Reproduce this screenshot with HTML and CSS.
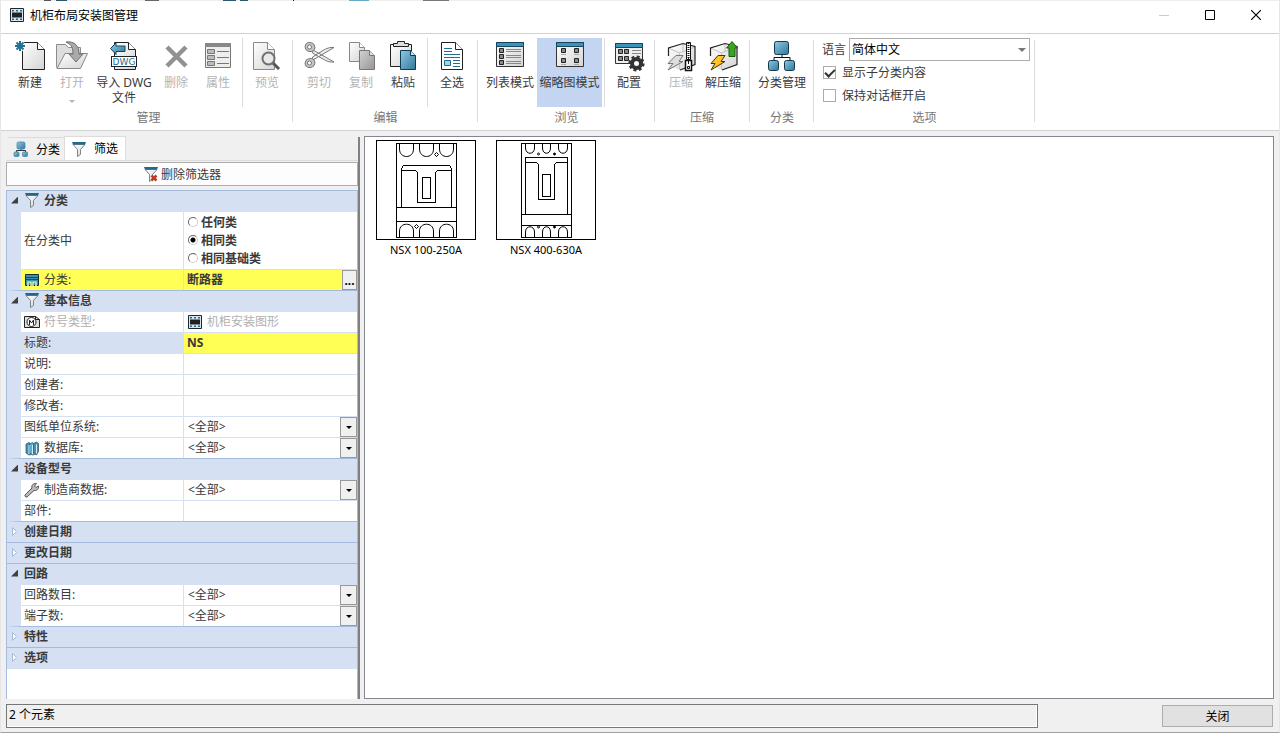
FILE: index.html
```html
<!DOCTYPE html>
<html lang="zh-CN">
<head>
<meta charset="utf-8">
<title>机柜布局安装图管理</title>
<link rel="stylesheet" href="styles.css">
</head>
<body>
<svg class="defs" aria-hidden="true">
  <defs>
    <linearGradient id="paper" x1="0" y1="0" x2="1" y2="1"><stop offset="0" stop-color="#fff"/><stop offset="1" stop-color="#d4d4d4"/></linearGradient>
    <linearGradient id="grey" x1="0" y1="0" x2="1" y2="1"><stop offset="0" stop-color="#d2d2d2"/><stop offset="1" stop-color="#969696"/></linearGradient>
    <linearGradient id="blue" x1="0" y1="0" x2="1" y2="1"><stop offset="0" stop-color="#8ccbe6"/><stop offset="1" stop-color="#337699"/></linearGradient>
  </defs>
  <symbol id="funnel" viewBox="0 0 16 16"><path d="M2 3.500h12l-4.500 5v5l-3 2v-7z" fill="url(#paper)" stroke="#7d858b"/><path d="M1 1h14l-1 2.500H2z" fill="#23678a"/></symbol>
  <symbol id="cabinet" viewBox="0 0 16 16"><path d="M1.500 1.500h13v13h-13z" fill="#d9e6ed" stroke="#1c2830"/><path d="M3 5.500h10v5H3z" fill="#222"/><path d="M3 3h2v1.500H3zM7 3h2v1.500H7zM11 3h2v1.500h-2zM3 11.500h2V13H3zM7 11.500h2V13H7zM11 11.500h2V13h-2z" fill="#246684"/></symbol>
  <symbol id="tree" viewBox="0 0 32 32"><path d="M16 15v3M8 21v-3.500h16V21" fill="none" stroke="#111"/><g fill="url(#blue)" stroke="#12394d"><rect x="8.500" y="1.500" width="14" height="13" rx="2"/><rect x="2.500" y="20.500" width="10" height="10" rx="2"/><rect x="18.500" y="20.500" width="10" height="10" rx="2"/></g></symbol>
  <symbol id="tree-small" viewBox="0 0 16 16"><path d="M8 8v2M3.500 11V9.500h9V11" fill="none" stroke="#333"/><g fill="url(#blue)" stroke="#4a88a6" stroke-width=".8"><rect x="4" y="1" width="8" height="7" rx="1.500"/><rect x="1" y="11" width="5" height="4.500" rx="1"/><rect x="9.500" y="11" width="5" height="4.500" rx="1"/></g></symbol>
  <symbol id="cube" viewBox="0 0 32 32"><path d="M3.500 8L18 3.500l12 3v18L15 30 3.500 26z" fill="url(#paper)"/><path d="M3.500 8l11 5v16.500M14.500 13L30 7M18 4v8" fill="none" stroke="#c2c2c2"/><path d="M3.500 16V8L18 3.500l12 3v18L15 30" fill="none" stroke="#222" stroke-width="1.200"/></symbol>
</svg>

<div class="window">
  <div class="backdrop-edge"></div>
  <header class="titlebar">
    <svg class="ic16" viewBox="0 0 16 16"><use href="#cabinet"/></svg>
    <h1>机柜布局安装图管理</h1>
    <div class="caption-buttons">
      <button type="button" disabled aria-label="最小化"><svg viewBox="0 0 10 10"><path d="M0 5.500h10" stroke="#ccc"/></svg></button>
      <button type="button" aria-label="最大化"><svg viewBox="0 0 10 10"><path d="M.5.5h9v9h-9z" fill="none" stroke="#000"/></svg></button>
      <button type="button" aria-label="关闭窗口"><svg viewBox="0 0 10 10"><path d="M0 0l10 10M10 0L0 10" stroke="#000" stroke-width="1.200"/></svg></button>
    </div>
  </header>

  <nav class="ribbon">
    <section class="group">
      <div class="tools">
        <button type="button" class="tool"><svg viewBox="0 0 32 32"><path d="M8.500 2.500h15l7 7v20h-22z" fill="url(#paper)" stroke="#222"/><path d="M23.500 2.500v7h7" fill="#fff" stroke="#222"/><circle cx="6" cy="6" r="5.500" fill="#fff"/><path d="M6 1v10M1 6h10M2.500 2.500l7 7M9.500 2.500l-7 7" stroke="#246f94" stroke-width="2"/></svg>新建</button>
        <button type="button" class="tool" disabled><svg viewBox="0 0 32 32"><path d="M.5 27.500v-23h9l3 3h12v7" fill="#ddd" stroke="#8c8c8c"/><path d="M1 28.500l8-15h22.500l-7 15z" fill="url(#paper)" stroke="#888"/><path d="M10 2c9-1 13 4 13 12h4l-7 8-7-8h4c0-6-1-9-7-12z" fill="#aaa" stroke="#707070"/></svg>打开<span class="caret"></span></button>
        <button type="button" class="tool import"><svg viewBox="0 0 32 32"><path d="M6.500 2.500h14l7 7v20h-21z" fill="url(#paper)" stroke="#222"/><path d="M20.500 2.500v7h7" fill="#fff" stroke="#222"/><path d="M2.500 8.500L8 3v3h9v5.500H8v3z" fill="url(#blue)" stroke="#12455c"/><rect x="3.500" y="16.500" width="25" height="10" fill="#fff" stroke="#222"/><text x="16" y="25" class="dwg">DWG</text></svg>导入 DWG 文件</button>
        <button type="button" class="tool" disabled><svg viewBox="0 0 32 32"><path d="M7 7l19 19M26 7L7 26" stroke="#929292" stroke-width="4.500"/></svg>删除</button>
        <button type="button" class="tool" disabled><svg viewBox="0 0 32 32"><path d="M3.500 3.500h25v24h-25z" fill="#eee" stroke="#777"/><path d="M3 3h26v4H3z" fill="#888"/><path d="M5.500 9.500h7v4h-7zM5.500 15.500h7v4h-7zM5.500 21.500h7v4h-7z" fill="#bbb" stroke="#777"/><path d="M15 11.500h12M15 17.500h12M15 23.500h12" stroke="#777"/></svg>属性</button>
        <span class="rule"></span>
        <button type="button" class="tool" disabled><svg viewBox="0 0 32 32"><path d="M2.500 2.500h14l7 7v20h-21z" fill="url(#paper)" stroke="#888"/><path d="M16.500 2.500v7h7" fill="#fff" stroke="#888"/><path d="M22 23l6 6" stroke="#555" stroke-width="3"/><circle cx="17.500" cy="18.500" r="6" fill="#e9e9e9" stroke="#707070" stroke-width="2"/></svg>预览</button>
      </div>
      <h2>管理</h2>
    </section>
    <span class="divider"></span>

    <section class="group">
      <div class="tools">
        <button type="button" class="tool" disabled><svg viewBox="0 0 32 32"><path d="M10 20L31 7.500c-4-.5-8 1-11 3L9.500 17zM10 10l21 12c-4 .5-8-1-11-3L9.500 13z" fill="#eee" stroke="#777"/><g fill="#c4c4c4" stroke="#777"><ellipse cx="7" cy="7" rx="5" ry="4.500" transform="rotate(25 7 7)"/><ellipse cx="7" cy="23" rx="5" ry="4.500" transform="rotate(-25 7 23)"/></g><g fill="#fff" stroke="#777"><circle cx="6.500" cy="7" r="2"/><circle cx="6.500" cy="23" r="2"/></g></svg>剪切</button>
        <button type="button" class="tool" disabled><svg viewBox="0 0 32 32"><path d="M4.500 2.500h10l5 5v14h-15z" fill="url(#paper)" stroke="#888"/><path d="M14.500 2.500v5h5" fill="#fff" stroke="#888"/><path d="M14.500 10.500h10l5 5v14h-15z" fill="url(#grey)" stroke="#777"/><path d="M24.500 10.500v5h5" fill="#ddd" stroke="#777"/></svg>复制</button>
        <button type="button" class="tool"><svg viewBox="0 0 32 32"><path d="M3.500 4.500h21v22h-21z" fill="url(#paper)" stroke="#222"/><path d="M6.500 6.500v-3h4v-2h7v2h4v3z" fill="#ddd" stroke="#222"/><path d="M13.500 10.500h10l5 5v14h-15z" fill="url(#blue)" stroke="#12394d"/><path d="M23.500 10.500v5h5" fill="#c5e5f2" stroke="#12394d"/></svg>粘贴</button>
        <span class="rule"></span>
        <button type="button" class="tool"><svg viewBox="0 0 32 32"><path d="M5.500 2.500h14l7 7v20h-21z" fill="#fff" stroke="#222"/><path d="M19.500 2.500v7h7" fill="#fff" stroke="#222"/><path d="M8 8.500h8M8 11.500h8M8 14.500h16M8 17.500h16M17 20.500h7M17 23.500h7M17 26.500h7" stroke="#226d92"/><path d="M8.500 20.500h6v5h-6z" fill="#a5d4e8" stroke="#226d92"/></svg>全选</button>
      </div>
      <h2>编辑</h2>
    </section>
    <span class="divider"></span>

    <section class="group">
      <div class="tools">
        <button type="button" class="tool wide"><svg viewBox="0 0 32 32"><path d="M2.500 2.500h27v24h-27z" fill="url(#paper)" stroke="#333"/><path d="M2.500 2.500h27v4h-27z" fill="#3c92b8" stroke="#17465c"/><path d="M5.500 8.500h4v4h-4zM5.500 14.500h4v4h-4zM5.500 20.500h4v4h-4z" fill="#888" stroke="#222"/><path d="M12 9.500h15M12 11.500h15M12 15.500h15M12 17.500h15M12 21.500h15M12 23.500h15" stroke="#888"/></svg>列表模式</button>
        <button type="button" class="tool active" aria-pressed="true"><svg viewBox="0 0 32 32"><path d="M2.500 2.500h27v24h-27z" fill="url(#paper)" stroke="#333"/><path d="M2.500 2.500h27v4h-27z" fill="#3c92b8" stroke="#17465c"/><path d="M7.500 8.500h4v4h-4zM20.500 8.500h4v4h-4zM7.500 18.500h4v4h-4zM20.500 18.500h4v4h-4z" fill="#888" stroke="#222"/><path d="M7 14.500h5M20 14.500h5M7 24.500h5M20 24.500h5" stroke="#aaa"/></svg>缩略图模式</button>
        <span class="rule tight"></span>
        <button type="button" class="tool"><svg viewBox="0 0 32 32"><path d="M2.500 3.500h27v20h-27z" fill="#eee" stroke="#333"/><path d="M2.500 3.500h27v4h-27z" fill="#3c92b8" stroke="#17465c"/><path d="M5.500 9.500h4v4h-4zM11.500 9.500h4v4h-4zM5.500 16.500h4v4h-4zM11.500 16.500h4v4h-4z" fill="#888" stroke="#222"/><path d="M19 10.500h9M19 13.500h9" stroke="#888"/><circle cx="23.500" cy="23.500" r="4.500" fill="#fff" stroke="#333" stroke-width="4"/><circle cx="23.500" cy="23.500" r="6.800" fill="none" stroke="#333" stroke-width="2.600" stroke-dasharray="2.900 2.440"/></svg>配置</button>
      </div>
      <h2>浏览</h2>
    </section>
    <span class="divider"></span>

    <section class="group spaced">
      <div class="tools">
        <button type="button" class="tool" disabled><svg viewBox="0 0 32 32"><use href="#cube"/><path d="M11 15.500h7l-4 6h4L3 30l5-6.500H3z" fill="#ddd" stroke="#777"/><path d="M21.500 2.500h4v17h-4z" fill="#fff" stroke="#111"/><path d="M23.500 3v17" stroke="#111" stroke-width="2" stroke-dasharray="1 1"/><path d="M20.500 20.500h6v10h-6z" fill="#fff" stroke="#111" stroke-width="1.500"/><path d="M23.500 18v6M22.500 26.500h2v2h-2z" fill="none" stroke="#111"/></svg>压缩</button>
        <button type="button" class="tool"><svg viewBox="0 0 32 32"><use href="#cube"/><path d="M11 15.500h7l-4 6h4L4 30l4-6.500H4z" fill="#ffc32c" stroke="#4c3300"/><path d="M25 1.500l5.500 6.500h-2.500v8.500h-6V8h-2.500z" fill="#3ba522" stroke="#185c0b"/></svg>解压缩</button>
      </div>
      <h2>压缩</h2>
    </section>
    <span class="divider"></span>

    <section class="group">
      <div class="tools">
        <button type="button" class="tool wide"><svg viewBox="0 0 32 32"><use href="#tree"/></svg>分类管理</button>
      </div>
      <h2>分类</h2>
    </section>
    <span class="divider"></span>

    <section class="group">
      <div class="options">
        <div class="language"><label for="lang">语言</label><span class="combo"><select id="lang"><option>简体中文</option></select><span class="caret dark"></span></span></div>
        <label class="check"><input type="checkbox" checked>显示子分类内容</label>
        <label class="check"><input type="checkbox">保持对话框开启</label>
      </div>
      <h2>选项</h2>
    </section>
    <span class="divider"></span>
  </nav>

  <main class="body">
    <aside class="sidebar">
      <div class="tabs" role="tablist">
        <button type="button" role="tab" class="tab"><svg class="ic16" viewBox="0 0 16 16"><use href="#tree-small"/></svg>分类</button>
        <button type="button" role="tab" class="tab selected" aria-selected="true"><svg class="ic16" viewBox="0 0 16 16"><use href="#funnel"/></svg>筛选</button>
      </div>
      <button type="button" class="clear"><svg class="ic16" viewBox="0 0 16 16"><use href="#funnel"/><path d="M8.500 9.500l5 5M13.500 9.500l-5 5" stroke="#c03a20" stroke-width="2.500"/></svg>删除筛选器</button>

      <div class="filters">
        <button type="button" class="head"><i class="open"></i><svg class="ic16" viewBox="0 0 16 16"><use href="#funnel"/></svg>分类</button>
        <div class="row tall"><span class="name">在分类中</span>
          <div class="value radios">
            <label><input type="radio" name="scope">任何类</label>
            <label><input type="radio" name="scope" checked>相同类</label>
            <label><input type="radio" name="scope">相同基础类</label>
          </div></div>
        <div class="row marked end"><label class="name" for="f-class"><svg class="ic16" viewBox="0 0 16 16"><path d="M1.500 2.500h13v11h-13z" fill="#3d93ad" stroke="#142d38"/><path d="M2 5.500h12M2 7.500h12" stroke="#174a5e"/><path d="M4 14v-4h3v4M9 14v-4h3v4" fill="none" stroke="#f6ffc0" stroke-width="1.200"/><path d="M3 14h10" stroke="#ffff56" stroke-dasharray="2 2"/></svg>分类:</label><div class="value"><input id="f-class" type="text" value="断路器"><button type="button" class="more" aria-label="浏览分类">...</button></div></div>

        <button type="button" class="head"><i class="open"></i><svg class="ic16" viewBox="0 0 16 16"><use href="#funnel"/></svg>基本信息</button>
        <div class="row muted"><span class="name"><svg class="ic16" viewBox="0 0 16 16"><path d="M.5 2.500h11l4 3v8H.5z" fill="#ddd" stroke="#222"/><circle cx="7.500" cy="8" r="4.500" fill="#fff" stroke="#222"/><path d="M5.500 11V6l2 3 2-3v5M11.500 2.500v3h4" fill="none" stroke="#222"/></svg>符号类型:</span><div class="value with-icon"><svg class="ic16" viewBox="0 0 16 16"><use href="#cabinet"/></svg>机柜安装图形</div></div>
        <div class="row current"><label class="name" for="f-title">标题:</label><div class="value"><input id="f-title" type="text" value="NS"></div></div>
        <div class="row"><label class="name" for="f-desc">说明:</label><div class="value"><input id="f-desc" type="text"></div></div>
        <div class="row"><label class="name" for="f-author">创建者:</label><div class="value"><input id="f-author" type="text"></div></div>
        <div class="row"><label class="name" for="f-editor">修改者:</label><div class="value"><input id="f-editor" type="text"></div></div>
        <div class="row"><label class="name" for="f-unit">图纸单位系统:</label><div class="value"><select id="f-unit"><option>&lt;全部&gt;</option></select><span class="drop"></span></div></div>
        <div class="row end"><label class="name" for="f-lib"><svg class="ic16" viewBox="0 0 16 16"><g stroke="#3a5a69" stroke-width=".8"><path d="M2 4l3-1.500L7 4v10.500L5 15l-3-2z" fill="#3f93b8"/><path d="M5.500 4l3-1.500 2 1.500v10.500l-2 .5-3-2z" fill="#5fabc9"/><path d="M9.500 3.500l3-1.500 2 1.500v8l-2 3.500-3-2z" fill="#3f93b8"/></g><path d="M5 5v9M8.500 5v9M12.500 4.500v9" stroke="#d5edf7"/></svg>数据库:</label><div class="value"><select id="f-lib"><option>&lt;全部&gt;</option></select><span class="drop"></span></div></div>

        <button type="button" class="head"><i class="open"></i>设备型号</button>
        <div class="row"><label class="name" for="f-maker"><svg class="ic16" viewBox="0 0 16 16"><path d="M1 13l7-7c-1-3 2-5 4.500-4.500L10.500 4l1.500 1.500L14.500 4c.5 3-2 5-4.500 4.500l-7 6.500c-1.500.5-2.500-1-2-2z" fill="#bbb" stroke="#555"/></svg>制造商数据:</label><div class="value"><select id="f-maker"><option>&lt;全部&gt;</option></select><span class="drop"></span></div></div>
        <div class="row end"><label class="name" for="f-part">部件:</label><div class="value"><input id="f-part" type="text"></div></div>

        <button type="button" class="head end"><svg class="closed" viewBox="0 0 14 9"><path d="M2.500.5v8l4-4z"/></svg>创建日期</button>
        <button type="button" class="head end"><svg class="closed" viewBox="0 0 14 9"><path d="M2.500.5v8l4-4z"/></svg>更改日期</button>
        <button type="button" class="head"><i class="open"></i>回路</button>
        <div class="row"><label class="name" for="f-circuits">回路数目:</label><div class="value"><select id="f-circuits"><option>&lt;全部&gt;</option></select><span class="drop"></span></div></div>
        <div class="row end"><label class="name" for="f-terms">端子数:</label><div class="value"><select id="f-terms"><option>&lt;全部&gt;</option></select><span class="drop"></span></div></div>
        <button type="button" class="head end"><svg class="closed" viewBox="0 0 14 9"><path d="M2.500.5v8l4-4z"/></svg>特性</button>
        <button type="button" class="head"><svg class="closed" viewBox="0 0 14 9"><path d="M2.500.5v8l4-4z"/></svg>选项</button>
      </div>
    </aside>
    <div class="splitter"></div>

    <section class="gallery">
      <figure>
        <svg viewBox="0 0 100 100"><g fill="none" stroke="#000" shape-rendering="crispEdges"><path d="M.5.5h99v99H.5zM20.500 3.500h60v94h-60zM20.500 67.500h60M20.500 81.500h60"/><path d="M25.500 66.500V28.500l2-3h46l2 3v38M25.500 30.500h14l2 2v30h18v-30l2-2h14M46.500 37.500h8v21h-8z"/></g><g fill="none" stroke="#000"><path d="M23.500 4v5c0 10 14 10 14 0V4M43.500 4v5c0 10 14 10 14 0V4M63.500 4v5c0 10 14 10 14 0V4M23.500 97v-6c0-9 14-9 14 0v6M43.500 97v-6c0-9 14-9 14 0v6M63.500 97v-6c0-9 14-9 14 0v6"/><path d="M60.500 12.500l2 2-2 2-2-2zM40.500 84.500l2 2-2 2-2-2z"/></g></svg>
        <figcaption>NSX 100-250A</figcaption>
      </figure>
      <figure>
        <svg viewBox="0 0 100 100"><g fill="none" stroke="#000" shape-rendering="crispEdges"><path d="M.5.5h99v99H.5zM25.500 3.500h50v94h-50zM25.500 74.500h50M25.500 85.500h50"/><path d="M29.500 74V17.500h42V74M29.500 22.500h11l2 2v35h16v-35l2-2h11M46.500 34.500h8v22h-8z"/></g><g fill="none" stroke="#000"><path d="M29.500 4v4c0 7 9 7 9 0V4M46.500 4v4c0 7 8 7 8 0V4M62.500 4v4c0 7 9 7 9 0V4M29.500 97v-5c0-7 9-7 9 0v5M46.500 97v-5c0-7 8-7 8 0v5M62.500 97v-5c0-7 9-7 9 0v5"/><circle cx="42.500" cy="14" r="1"/><circle cx="58.500" cy="14" r="1" fill="#000"/><circle cx="42.500" cy="87" r="1"/><circle cx="58.500" cy="87" r="1" fill="#000"/></g></svg>
        <figcaption>NSX 400-630A</figcaption>
      </figure>
    </section>
  </main>

  <footer class="footer">
    <output class="status">2 个元素</output>
    <button type="button" class="close">关闭</button>
  </footer>
</div>
</body>
</html>
```
FILE: styles.css
```css
* { box-sizing: border-box; }

body {
  margin: 0;
  font: 12px/15px "Noto Sans", "Noto Sans CJK SC", sans-serif;
  color: #3a3a3a;
}

button, input, select { font: inherit; color: inherit; margin: 0; }
button { border: 0; padding: 0; background: none; }
.defs { position: absolute; width: 0; height: 0; }
.ic16 { width: 16px; height: 16px; flex: none; }

.window {
  display: flex;
  flex-direction: column;
  height: 100vh;
  background: #f0f0f0;
  border: 1px solid #e6e6e6;
  border-top: 0;
  border-bottom-color: #a0a0a0;
}

/* Sliver of the application behind the dialog */
.backdrop-edge {
  flex: none;
  height: 1px;
  background: linear-gradient(90deg,
    #eee 43px, #555 43px 50px, #eee 50px 55px, #27586e 55px 66px,
    #eee 66px 144px, #666 144px 158px, #eee 158px 222px,
    #27586e 222px 235px, #eee 235px 239px, #27586e 239px 247px,
    #eee 247px 292px, #111 292px 293px, #eee 293px 348px,
    #6aa7c4 348px 368px, #eee 368px 422px, #777 422px 448px, #eee 448px);
}

/* Title bar */
.titlebar {
  flex: none;
  display: flex;
  align-items: center;
  height: 33px;
  padding-left: 8px;
  padding-bottom: 4px;
  background: #fff;
  border-bottom: 1px solid #d2d2d2;
}
.titlebar h1 { flex: 1; margin: 0 0 0 5px; font-size: 12px; font-weight: 400; color: #000; }
.caption-buttons { display: flex; }
.caption-buttons button { width: 46px; height: 28px; display: grid; place-items: center; }
.caption-buttons svg { width: 10px; height: 10px; }

/* Ribbon */
.ribbon {
  flex: none;
  display: flex;
  height: 97px;
  padding: 4px 0 0 3px;
  background: #fff;
  border-bottom: 1px solid #d2d2d2;
}
.group { padding: 0 4px 0 5px; display: flex; flex-direction: column; }
.group.spaced { padding-right: 5px; }
.group h2 { margin: 3px 0 0; font-size: 12px; line-height: 16px; font-weight: 400; text-align: center; color: #777; }
.divider { width: 1px; margin: 2px 0 8px; background: #dcdcdc; }
.tools { display: flex; height: 69px; }
.rule { width: 1px; margin: 0 3px; background: #dcdcdc; }
.rule.tight { margin-left: 2px; }
.tool {
  width: 42px;
  padding-top: 2px;
  display: flex;
  flex-direction: column;
  align-items: center;
  white-space: nowrap;
}
.tool svg { width: 32px; height: 32px; flex: none; margin-bottom: 3px; }
.tool:disabled { color: #b4b4b4; }
.tool.import { width: 62px; white-space: normal; }
.tool.wide { width: 54px; }
.tool.active { width: 65px; background: #c3d5f1; }
.dwg { font: 9px "DejaVu Sans", sans-serif; fill: #1d6e96; text-anchor: middle; }
.caret { border: 3px solid transparent; border-top-color: #b4b4b4; border-bottom: 0; margin-top: 10px; }

.options { width: 211px; height: 69px; padding-left: 3px; }
.language { display: flex; align-items: center; gap: 3px; }
.combo { position: relative; flex: 1; display: flex; }
.combo select {
  appearance: none;
  width: 100%;
  height: 23px;
  padding: 0 2px;
  background: #fff;
  border: 1px solid #ababab;
  border-radius: 0;
  color: #000;
}
.caret.dark { position: absolute; right: 4px; top: 10px; margin: 0; border-width: 4px; border-bottom: 0; border-top-color: #777; pointer-events: none; }
.check { display: flex; align-items: center; gap: 6px; height: 23px; padding-left: 1px; }
.check input {
  appearance: none;
  width: 13px;
  height: 13px;
  border: 1px solid #ababab;
  background: #fff;
  display: grid;
  place-items: center;
}
.check input:checked::before {
  content: "";
  width: 8px;
  height: 4px;
  border: solid #333;
  border-width: 0 0 2px 2px;
  transform: rotate(-45deg);
  margin-bottom: 2px;
}

/* Body */
.body { flex: 1; min-height: 0; display: flex; padding: 5px 5px 4px; }
.sidebar { width: 352px; flex: none; display: flex; flex-direction: column; }
.tabs { flex: none; display: flex; align-items: flex-end; height: 25px; padding-left: 2px; border-bottom: 1px solid #dcdcdc; }
.tab { display: flex; align-items: center; gap: 7px; height: 23px; padding: 0 4px 0 5px; border-top: 1px solid #dcdcdc; color: #000; }
.tab.selected { height: 24px; padding: 0 7px 0 6px; background: #fff; border: 1px solid #dcdcdc; border-bottom: 0; }
.clear {
  flex: none;
  display: flex;
  align-items: center;
  justify-content: center;
  gap: 2px;
  height: 24px;
  margin-top: 1px;
  background: #fdfdfd;
  border: 1px solid #adadad;
}

.filters { flex: 1; min-height: 0; margin-top: 4px; background: #fff; border: 1px solid #a5bbdd; border-bottom: 0; }
.head {
  display: flex;
  align-items: center;
  width: 100%;
  height: 21px;
  padding: 0 0 2px 3px;
  background: #d5e0f2;
  border-bottom: 1px solid #d5e0f2;
  font-weight: 700;
  text-align: left;
}
.head .ic16 { margin-right: 4px; }
.open { width: 14px; height: 7px; flex: none; }
.open::before { content: ""; display: block; width: 7px; height: 7px; margin-left: 1px; background: #404040; clip-path: polygon(100% 0, 100% 100%, 0 100%); }
.closed { width: 14px; height: 9px; flex: none; fill: #fff; stroke: #a5bbdd; }
.row {
  display: grid;
  grid-template-columns: 162px 1fr;
  height: 21px;
  border-left: 14px solid #d5e0f2;
  border-bottom: 1px solid #d5e0f2;
}
.row.tall { height: 58px; }
.head.end, .row.end { border-bottom-color: #a5bbdd; }
.name { display: flex; align-items: center; gap: 4px; padding: 0 0 1px 3px; }
.value { display: flex; min-width: 0; border-left: 1px solid #d5e0f2; position: relative; }
.value input[type="text"] { flex: 1; min-width: 0; padding: 0 3px 2px; border: 0; background: none; font-weight: 700; }
.value select { appearance: none; width: 100%; padding: 0 4px 1px; border: 0; background: none; }
.drop { position: absolute; right: 0; top: 0; width: 17px; height: 20px; border: 1px solid #999; background: #f0f0f0; display: grid; place-items: center; pointer-events: none; }
.drop::before { content: ""; border: 3px solid transparent; border-top-color: #000; border-bottom: 0; }
.radios { flex-direction: column; padding: 1px 0 0 4px; }
.radios label { display: flex; align-items: center; gap: 3px; height: 18px; font-weight: 700; }
.radios input { appearance: none; width: 10px; height: 10px; border: 1px solid #ccc; border-top-color: #666; border-left-color: #666; border-radius: 50%; background: #fff; }
.radios input:checked { background: radial-gradient(circle, #000 2px, #fff 3px); }
.marked, .current .value { background: #ffff56; background-clip: padding-box; }
.current .name { background: #d5e0f2; }
.more { width: 15px; background: #f0f0f0; border: 1px solid #999; color: #000; font-weight: 700; }
.muted { color: #b0b0b0; }
.with-icon { align-items: center; gap: 4px; padding: 0 0 1px 3px; }

.splitter { width: 2px; margin: 1px 4px 0 0; background: #808080; }
.gallery {
  flex: 1;
  display: flex;
  align-items: flex-start;
  gap: 20px;
  padding: 3px 11px;
  background: #fff;
  border: 1px solid #828790;
}
.gallery figure { margin: 0; width: 100px; }
.gallery svg { display: block; width: 100px; height: 100px; }
.gallery figcaption { margin-top: 2px; font-size: 11px; text-align: center; color: #000; white-space: nowrap; }

/* Footer */
.footer { flex: none; display: flex; justify-content: space-between; align-items: center; gap: 124px; padding: 1px 6px 4px 5px; color: #000; }
.status { flex: 1; height: 24px; padding: 2px; border: 1px solid #777; box-shadow: inset -1px -1px #fff; }
.close { width: 111px; height: 22px; background: #e1e1e1; border: 1px solid #adadad; }
```
